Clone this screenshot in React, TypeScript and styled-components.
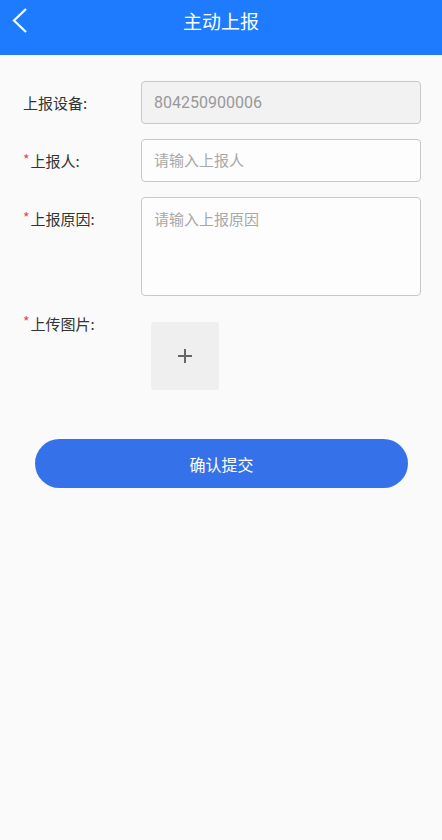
import React from "react";
import styled, { createGlobalStyle } from "styled-components";

const Global = createGlobalStyle`
  html, body { margin: 0; padding: 0; background: #fafafa; }
  body { font-family: Roboto, "Noto Sans CJK SC", sans-serif; }
  * { box-sizing: border-box; }
`;

const Page = styled.div`
  width: 442px;
  min-height: 840px;
  background: #fafafa;
`;

const Header = styled.header`
  height: 55px;
  background: #1f7bfd;
  display: grid;
  grid-template-columns: 48px 1fr 48px;
  align-items: start;
`;

const Back = styled.button`
  height: 42px;
  border: 0;
  background: none;
  padding: 0 0 0 11px;
  display: flex;
  align-items: center;
`;

const Title = styled.h1`
  margin: 0;
  height: 42px;
  line-height: 42px;
  text-align: center;
  color: #fff;
  font-size: 19px;
  font-weight: 400;
  font-family: "Noto Sans CJK SC", sans-serif;
`;

const Form = styled.form`
  padding: 26px 21px 0 23px;
  display: flex;
  flex-direction: column;
  gap: 15px;
`;

const Row = styled.div`
  display: flex;
  align-items: flex-start;
`;

const Label = styled.label<{ $compact?: boolean }>`
  width: 118px;
  flex: none;
  height: ${(p) => (p.$compact ? "20px" : "43px")};
  display: flex;
  align-items: center;
  font-family: "Noto Sans CJK SC", sans-serif;
  font-size: 15px;
  color: #333;
  margin-top: ${(p) => (p.$compact ? "2px" : "0")};
`;

const Star = styled.span`
  color: #e04848;
  font-size: 14px;
  margin-right: 1px;
  align-self: center;
  transform: translateY(-2px);
`;

const Field = styled.input<{ $disabled?: boolean }>`
  flex: 1;
  min-width: 0;
  height: 43px;
  border: 1px solid #c8c8c8;
  border-radius: 4px;
  background: ${(p) => (p.$disabled ? "#f2f2f2" : "#fdfdfd")};
  padding: 0 12px;
  font-family: Roboto, "Noto Sans CJK SC", sans-serif;
  font-size: 16px;
  color: #999;
  outline: none;
  &::placeholder { color: #a8a8a8; font-size: 15px; }
`;

const Area = styled.textarea`
  flex: 1;
  height: 99px;
  border: 1px solid #c8c8c8;
  border-radius: 4px;
  background: #fdfdfd;
  padding: 10px 12px;
  font-family: "Noto Sans CJK SC", sans-serif;
  font-size: 15px;
  resize: none;
  outline: none;
  &::placeholder { color: #a8a8a8; }
`;

const Uploader = styled.div`
  padding: 11px 10px 10px;
`;

const AddBox = styled.div`
  width: 68px;
  height: 68px;
  background: #efefef;
  border-radius: 2px;
  display: flex;
  align-items: center;
  justify-content: center;
`;

const Submit = styled.button`
  margin: 24px 13px 0 12px;
  height: 49px;
  border: 0;
  border-radius: 25px;
  background: #3572e9;
  color: #fff;
  font-family: "Noto Sans CJK SC", sans-serif;
  font-size: 16px;
`;

export default function App() {
  return (
    <Page>
      <Global />
      <Header>
        <Back type="button">
          <svg width="18" height="28" viewBox="0 0 18 28">
            <path d="M15 2 L3 13.5 L15 25" fill="none" stroke="#fff" strokeWidth="2.2" />
          </svg>
        </Back>
        <Title>主动上报</Title>
        <div />
      </Header>
      <Form onSubmit={(e) => e.preventDefault()}>
        <Row>
          <Label>上报设备:</Label>
          <Field $disabled readOnly value="804250900006" />
        </Row>
        <Row>
          <Label><Star>*</Star>上报人:</Label>
          <Field placeholder="请输入上报人" />
        </Row>
        <Row>
          <Label><Star>*</Star>上报原因:</Label>
          <Area placeholder="请输入上报原因" />
        </Row>
        <Row>
          <Label $compact><Star>*</Star>上传图片:</Label>
          <Uploader>
            <AddBox>
              <svg width="16" height="16" viewBox="0 0 16 16">
                <path d="M8 1 V15 M1 8 H15" stroke="#666" strokeWidth="2" />
              </svg>
            </AddBox>
          </Uploader>
        </Row>
        <Submit type="submit">确认提交</Submit>
      </Form>
    </Page>
  );
}
